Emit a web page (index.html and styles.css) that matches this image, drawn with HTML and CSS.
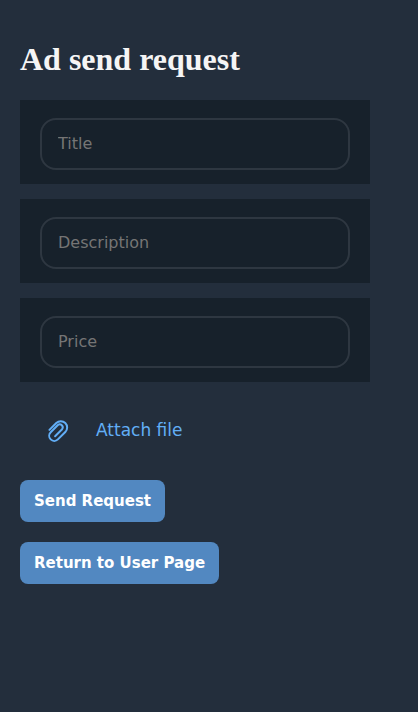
FILE: index.html
```html
<!DOCTYPE html>
<html lang="en">
<head>
<meta charset="utf-8">
<title>Ad send request</title>
<link rel="stylesheet" href="styles.css">
</head>
<body>
<main class="page">
<h1 class="title">Ad send request</h1>
<form class="form">
<div class="field"><input class="input" type="text" placeholder="Title"></div>
<div class="field"><input class="input" type="text" placeholder="Description"></div>
<div class="field"><input class="input" type="text" placeholder="Price"></div>
<div class="attach">
<svg class="clip" viewBox="0 0 24 26"><path d="M3.4 12.9l6.9-6.9a6.4 6.4 0 0 1 9 0 6.4 6.4 0 0 1 0 9l-7.4 7.4a5.1 5.1 0 0 1-7.2 0 5.1 5.1 0 0 1 0-7.2l7.2-7.2a3 3 0 0 1 4.2 4.2l-7 7"/></svg>
<span>Attach file</span>
</div>
<button class="button" type="button">Send Request</button>
<button class="button" type="button">Return to User Page</button>
</form>
</main>
</body>
</html>
```
FILE: styles.css
```css
* { box-sizing: border-box; }
body { margin: 0; background: #232e3c; font-family: "DejaVu Sans", sans-serif; }
.page { padding: 41px 20px 20px; }
.title { margin: 0 0 22px; font: bold 32px/37px "Liberation Serif", serif; color: #f5f5f5; }
.form { display: flex; flex-direction: column; align-items: flex-start; }
.field { width: 350px; height: 84px; padding: 18px 20px 14px; margin-bottom: 15px; background: #17212b; }
.input { display: block; width: 310px; height: 52px; padding: 0 16px 2px; border: 2px solid #2e3741; border-radius: 16px; background: transparent; color: #f5f5f5; font: 16px "DejaVu Sans", sans-serif; outline: none; }
.input::placeholder { color: #757575; opacity: 1; }
.attach { display: flex; align-items: center; gap: 26px; height: 48px; margin: 9px 0 26px; padding-left: 26px; color: #62aef6; font-size: 17px; }
.clip { width: 24px; height: 26px; fill: none; stroke: currentColor; stroke-width: 2; stroke-linecap: round; stroke-linejoin: round; }
.button { height: 42px; padding: 0 14px; margin: 0 0 20px; border: 0; border-radius: 8px; background: #5288c1; color: #fff; font: bold 15px "DejaVu Sans", sans-serif; }
```
